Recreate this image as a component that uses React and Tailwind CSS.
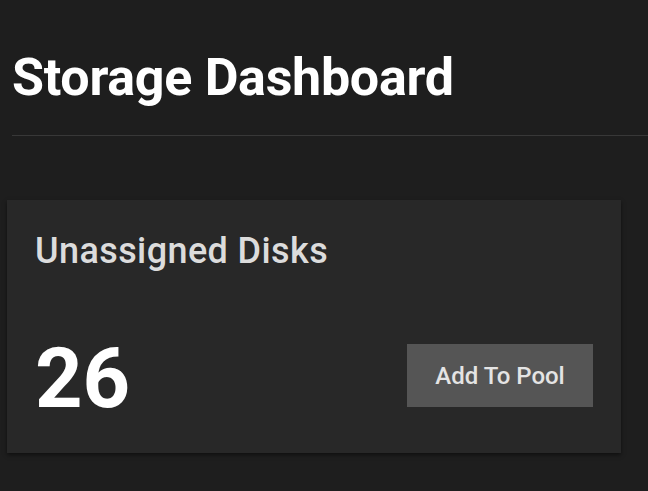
export default function App() {
  return (
    <div className="min-h-screen bg-[#1e1e1e] font-['Roboto',sans-serif] overflow-hidden">
      <div className="pt-[52px] pl-[12px]">
        <h1 className="text-[52px] leading-none font-bold text-white tracking-[-0.3px]">
          Storage Dashboard
        </h1>
        <div className="mt-[31px] h-px bg-[#383838]" />
      </div>

      <div className="mt-[64px] ml-[7px] w-[614px] h-[253px] bg-[#282828] shadow-[0_2px_4px_rgba(0,0,0,0.5)] px-[28px] pt-[33px]">
        <h2 className="text-[36px] leading-none font-medium text-[#dcdcdc] tracking-[0.4px]">
          Unassigned Disks
        </h2>
        <div className="mt-[68px] flex items-center justify-between">
          <span className="text-[83px] leading-none font-bold text-white">26</span>
          <button className="w-[186px] h-[63px] bg-[#555555] text-[24px] font-medium text-[#e4e4e4] mt-[-6px]">
            Add To Pool
          </button>
        </div>
      </div>
    </div>
  );
}
